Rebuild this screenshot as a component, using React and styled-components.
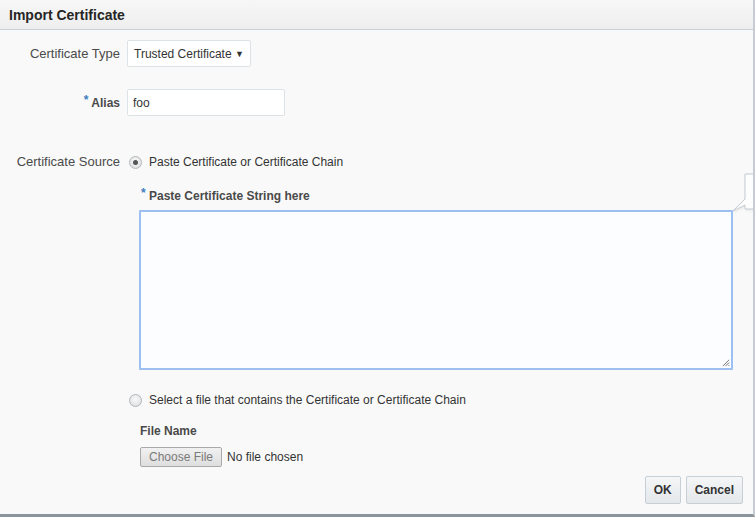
import styled, { createGlobalStyle } from 'styled-components'

const Global = createGlobalStyle`
  html, body {
    margin: 0;
    padding: 0;
    background: #f9f9f9;
  }
  * {
    box-sizing: border-box;
  }
`

export default function App() {
  return (
    <Dialog>
      <Global />
      {/* title bar */}
      <Header>Import Certificate</Header>

      <Body>
        {/* type */}
        <Row $top={10}>
          <Label>Certificate Type</Label>
          <Select>
            <span>Trusted Certificate</span>
            <Caret>▼</Caret>
          </Select>
        </Row>

        {/* alias */}
        <Row $top={22}>
          <Label $bold>
            <Star>*</Star> Alias
          </Label>
          <TextInput>foo</TextInput>
        </Row>

        {/* source */}
        <Row $top={38} $align="flex-start">
          <Label $line={16}>Certificate Source</Label>
          <Source>
            <Option>
              <Radio $checked />
              <span>Paste Certificate or Certificate Chain</span>
            </Option>
            <Nested $top={18}>
              <FieldLabel $shift={2}>
                <Star>*</Star> Paste Certificate String here
              </FieldLabel>
              <TextArea>
                <Grip viewBox="0 0 10 10">
                  <path d="M9 2 L2 9 M9 5 L5 9 M9 8 L8 9" stroke="#666" strokeWidth="1" />
                </Grip>
              </TextArea>
            </Nested>

            <Option $top={22}>
              <Radio />
              <span>Select a file that contains the Certificate or Certificate Chain</span>
            </Option>
            <Nested $top={15} $indent={13}>
              <FieldLabel>File Name</FieldLabel>
              <FileRow>
                <FileButton>Choose File</FileButton>
                <span>No file chosen</span>
              </FileRow>
            </Nested>
          </Source>
        </Row>
      </Body>

      {/* buttons */}
      <Footer>
        <Button>OK</Button>
        <Button>Cancel</Button>
      </Footer>

      {/* help bubble, cut at the edge */}
      <Bubble viewBox="0 0 24 40" width="24" height="40">
        <path
          d="M13 1 L26 1 L26 36 L13 36 L13 32 L1 38 L13 26 Z"
          fill="#fdfdfd"
          stroke="#c3cad1"
          strokeWidth="1"
        />
      </Bubble>
    </Dialog>
  )
}

const Dialog = styled.div`
  position: relative;
  width: 755px;
  height: 517px;
  display: flex;
  flex-direction: column;
  background: #f9f9f9;
  border-right: 2px solid #c5ccd3;
  border-bottom: 3px solid #8d959c;
  font-family: 'Liberation Sans', Arial, sans-serif;
  font-size: 12px;
  color: #333;
  overflow: hidden;
`

const Header = styled.div`
  height: 30px;
  flex: none;
  padding: 0 9px;
  display: flex;
  align-items: center;
  font-size: 14px;
  font-weight: 700;
  color: #252525;
  background: linear-gradient(#f7f7f7, #eeeeee);
  border-bottom: 1px solid #c8d0d8;
`

const Body = styled.div`
  flex: 1;
  display: flex;
  flex-direction: column;
`

const Row = styled.div`
  display: flex;
  align-items: ${p => p.$align || 'center'};
  gap: 7px;
  margin-top: ${p => p.$top || 0}px;
`

const Label = styled.div`
  width: 120px;
  flex: none;
  text-align: right;
  color: #4a4a4a;
  font-size: ${p => (p.$bold ? 12 : 13)}px;
  font-weight: ${p => (p.$bold ? 700 : 400)};
  line-height: ${p => (p.$line ? `${p.$line}px` : 'normal')};
`

const Star = styled.span`
  color: #3d7fc1;
  font-weight: 700;
  position: relative;
  top: -3px;
`

const Select = styled.div`
  width: 124px;
  height: 27px;
  display: flex;
  align-items: center;
  justify-content: space-between;
  padding: 0 6px;
  background: #fff;
  border: 1px solid #dde2e6;
  border-radius: 2px;
  color: #333;
`

const Caret = styled.span`
  font-size: 9px;
  color: #333;
`

const TextInput = styled.div`
  width: 158px;
  height: 27px;
  display: flex;
  align-items: center;
  padding: 0 5px;
  background: #fff;
  border: 1px solid #dde2e6;
  border-radius: 2px;
`

const Source = styled.div`
  display: flex;
  flex-direction: column;
`

const Option = styled.div`
  display: flex;
  align-items: center;
  gap: 7px;
  height: 16px;
  margin-top: ${p => p.$top || 0}px;
  color: #333;
`

const Radio = styled.span`
  position: relative;
  width: 13px;
  height: 13px;
  margin-left: 2px;
  border-radius: 50%;
  border: 1px solid #b3b7bb;
  background: radial-gradient(circle at 50% 40%, #fafafa, #d8dadc);

  &::after {
    content: '';
    display: ${p => (p.$checked ? 'block' : 'none')};
    position: absolute;
    left: 3px;
    top: 3px;
    width: 5px;
    height: 5px;
    border-radius: 50%;
    background: #555;
  }
`

const Nested = styled.div`
  display: flex;
  flex-direction: column;
  padding-left: ${p => p.$indent || 12}px;
  margin-top: ${p => p.$top || 0}px;
`

const FieldLabel = styled.div`
  font-weight: 700;
  color: #4a4a4a;
  line-height: 16px;
  padding-left: ${p => p.$shift || 0}px;
`

const TextArea = styled.div`
  position: relative;
  width: 594px;
  height: 160px;
  margin-top: 6px;
  background: #fcfdfe;
  border: 2px solid #9dc0f2;
  border-radius: 1px;
`

const Grip = styled.svg`
  position: absolute;
  right: 1px;
  bottom: 1px;
  width: 9px;
  height: 9px;
`

const FileRow = styled.div`
  display: flex;
  align-items: center;
  gap: 5px;
  margin-top: 8px;
`

const FileButton = styled.div`
  height: 20px;
  padding: 0 8px;
  display: flex;
  align-items: center;
  font-size: 12px;
  color: #7a7a7a;
  background: linear-gradient(#f1f1f1, #dedede);
  border: 1px solid #a9a9a9;
  border-radius: 2px;
`

const Footer = styled.div`
  flex: none;
  display: flex;
  justify-content: flex-end;
  gap: 5px;
  padding: 0 10px 10px 0;
`

const Button = styled.div`
  height: 28px;
  padding: 0 8px;
  display: flex;
  align-items: center;
  font-weight: 700;
  color: #333;
  background: linear-gradient(#f4f6f7, #e4e8eb);
  border: 1px solid #c7cfd6;
  border-radius: 2px;
`

const Bubble = styled.svg`
  position: absolute;
  left: 732px;
  top: 173px;
  overflow: visible;
  filter: drop-shadow(1px 1px 1px rgba(0, 0, 0, 0.08));
`
